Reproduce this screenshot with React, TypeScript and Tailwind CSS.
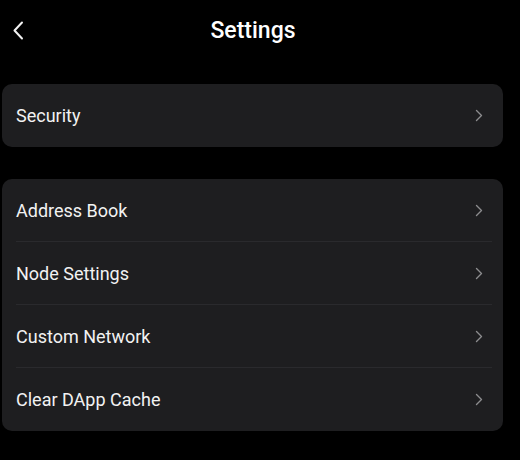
import React from 'react';

const ChevronRight = () => (
  <svg width="8" height="13" viewBox="0 0 8 13" fill="none" className="shrink-0">
    <path d="M1.5 1.5L6.5 6.5L1.5 11.5" stroke="#8c8c8e" strokeWidth="1.4" strokeLinecap="round" strokeLinejoin="round" />
  </svg>
);

const Row: React.FC<{ label: string; divider?: boolean }> = ({ label, divider }) => (
  <div className="relative">
    <div className="h-[63px] flex items-center justify-between pl-[14px] pr-[20px]">
      <span className="text-[18px] text-[#f2f2f2]">{label}</span>
      <ChevronRight />
    </div>
    {divider && <div className="absolute bottom-0 left-[14px] right-[11px] h-px bg-[#2a2a2d]" />}
  </div>
);

const App: React.FC = () => {
  const groups = [['Security'], ['Address Book', 'Node Settings', 'Custom Network', 'Clear DApp Cache']];

  return (
    <div
      className="w-[520px] h-[460px] bg-black overflow-hidden"
      style={{ fontFamily: 'Roboto, "Noto Sans", sans-serif' }}
    >
      {/* Header */}
      <div className="w-[506px] h-[62px] flex items-center relative">
        <button className="absolute left-[12px] top-[21px] p-0">
          <svg width="12" height="19" viewBox="0 0 12 19" fill="none">
            <path d="M10 1.5L2.5 9.5L10 17.5" stroke="#f2f2f2" strokeWidth="2" strokeLinecap="round" strokeLinejoin="round" />
          </svg>
        </button>
        <h1 className="w-full text-center text-[23px] font-medium text-white">Settings</h1>
      </div>

      <div className="pl-[2px] w-[503px] pt-[22px] flex flex-col gap-[32px]">
        {groups.map((g, gi) => (
          <div key={gi} className="bg-[#1e1e20] rounded-[10px]">
            {g.map((label, i) => (
              <Row key={label} label={label} divider={i < g.length - 1} />
            ))}
          </div>
        ))}
      </div>
    </div>
  );
};

export default App;
